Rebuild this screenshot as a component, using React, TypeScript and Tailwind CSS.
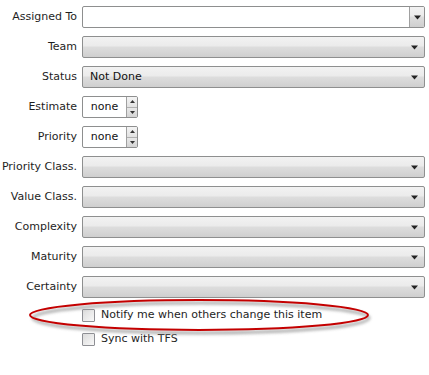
import React from "react";

const font = { fontFamily: '"DejaVu Sans", Verdana, sans-serif' };

function Arrow({ up = false }: { up?: boolean }) {
    return (
        <svg width="7" height="5" viewBox="0 0 7 5" className="block">
            {up ? <path d="M0 4.5 L3.5 0.5 L7 4.5 Z" fill="#222" /> : <path d="M0 0.5 L7 0.5 L3.5 4.5 Z" fill="#222" />}
        </svg>
    );
}

function Combo({ value }: { value?: string }) {
    return (
        <div className="flex-1 h-[22px] flex items-center rounded-[2px] border border-[#8e8f8f] bg-[linear-gradient(#f2f2f2_0%,#ebebeb_45%,#dddddd_50%,#cfcfcf_100%)] pl-[7px] pr-[6px]">
            <span className="flex-1 text-[11px] text-[#111]">{value}</span>
            <Arrow />
        </div>
    );
}

function TextCombo() {
    return (
        <div className="flex-1 h-[22px] flex rounded-[2px] border border-[#8e8f8f] bg-white overflow-hidden">
            <div className="flex-1" />
            <div className="w-[15px] flex items-center justify-center border-l border-[#a0a0a0] bg-[linear-gradient(#f2f2f2_0%,#ebebeb_45%,#dddddd_50%,#cfcfcf_100%)]">
                <Arrow />
            </div>
        </div>
    );
}

function Spin() {
    return (
        <div className="w-[56px] h-[22px] flex rounded-[2px] border border-[#8e8f8f] bg-white overflow-hidden">
            <div className="flex-1 flex items-center justify-center text-[11px] text-[#111]">none</div>
            <div className="w-[11px] flex flex-col border-l border-[#a0a0a0]">
                <div className="flex-1 flex items-center justify-center bg-[linear-gradient(#f4f4f4,#e2e2e2)] border-b border-[#b0b0b0]">
                    <svg width="5" height="3" viewBox="0 0 5 3"><path d="M0 3 L2.5 0 L5 3 Z" fill="#333" /></svg>
                </div>
                <div className="flex-1 flex items-center justify-center bg-[linear-gradient(#e8e8e8,#d4d4d4)]">
                    <svg width="5" height="3" viewBox="0 0 5 3"><path d="M0 0 L5 0 L2.5 3 Z" fill="#333" /></svg>
                </div>
            </div>
        </div>
    );
}

function Row({ label, children }: { label: string; children: React.ReactNode }) {
    return (
        <div className="flex items-center h-[22px] mb-[8px]">
            <div className="w-[82px] shrink-0 pr-[5px] text-right text-[11px] text-[#1e1e1e] whitespace-nowrap">{label}</div>
            {children}
        </div>
    );
}

function Check({ label }: { label: string }) {
    return (
        <div className="flex items-center h-[24px] pl-[82px]">
            <div className="w-[13px] h-[13px] shrink-0 border border-[#8e8f94] rounded-[1px] bg-[linear-gradient(135deg,#dcdcdc,#f8f8f8)]" />
            <span className="ml-[6px] text-[11px] text-[#1e1e1e]">{label}</span>
        </div>
    );
}

export default function App() {
    return (
        <div className="relative w-[429px] h-[375px] bg-white pt-[6px] pr-[4px]" style={font}>
            <Row label="Assigned To"><TextCombo /></Row>
            <Row label="Team"><Combo /></Row>
            <Row label="Status"><Combo value="Not Done" /></Row>
            <Row label="Estimate"><Spin /></Row>
            <Row label="Priority"><Spin /></Row>
            <Row label="Priority Class."><Combo /></Row>
            <Row label="Value Class."><Combo /></Row>
            <Row label="Complexity"><Combo /></Row>
            <Row label="Maturity"><Combo /></Row>
            <Row label="Certainty"><Combo /></Row>
            <div className="mt-[-3px]">
                <Check label="Notify me when others change this item" />
                <Check label="Sync with TFS" />
            </div>
            <svg className="absolute left-0 top-0 pointer-events-none" width="429" height="375">
                <defs>
                    <filter id="sh" x="-10%" y="-50%" width="120%" height="200%">
                        <feGaussianBlur stdDeviation="1.5" />
                    </filter>
                </defs>
                <ellipse cx="201" cy="318" rx="168" ry="15" fill="none" stroke="#9a9a9a" strokeWidth="3" filter="url(#sh)" opacity="0.8" />
                <ellipse cx="199" cy="315" rx="169" ry="15" fill="none" stroke="#c40000" strokeWidth="2" />
            </svg>
        </div>
    );
}
